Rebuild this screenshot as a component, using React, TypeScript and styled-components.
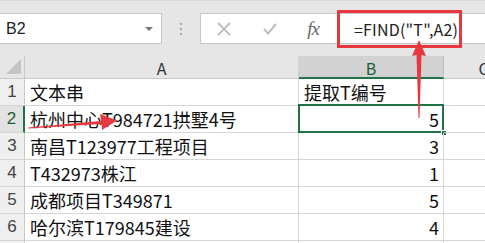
import React from 'react';
import styled, { createGlobalStyle } from 'styled-components';

const GlobalStyle = createGlobalStyle`
  html, body {
    margin: 0;
    padding: 0;
    overflow: hidden;
    background: #ffffff;
  }
`;

const FONT = `"Noto Sans CJK SC", "Noto Sans", sans-serif`;
const GREEN = '#217346';
const GRID = '#d6d6d6';

const Page = styled.div`
  position: relative;
  width: 485px;
  height: 243px;
  overflow: hidden;
  font-family: ${FONT};
  color: #111;
`;

const Toolbar = styled.div`
  display: flex;
  align-items: flex-start;
  height: 56px;
  box-sizing: border-box;
  padding-top: 13px;
  background: #e6e6e6;
  border-top: 1px solid #d8d8d8;
`;

const NameBox = styled.div`
  display: flex;
  align-items: center;
  justify-content: space-between;
  width: 162px;
  height: 31px;
  box-sizing: border-box;
  margin-top: -1px;
  padding: 0 8px 0 6px;
  background: #fff;
  border: 1px solid #c6c6c6;
  border-left: none;
  font-family: "Liberation Sans", sans-serif;
  font-size: 16px;
  color: #222;
`;

const Caret = styled.span`
  width: 0;
  height: 0;
  border-left: 4px solid transparent;
  border-right: 4px solid transparent;
  border-top: 4px solid #777;
`;

const Grip = styled.div`
  display: flex;
  flex-direction: column;
  align-items: center;
  gap: 3px;
  width: 38px;
  padding-top: 9px;

  span {
    width: 2px;
    height: 2px;
    background: #a8a8a8;
  }
`;

const FormulaBox = styled.div`
  flex: 1;
  display: flex;
  align-items: center;
  height: 31px;
  box-sizing: border-box;
  margin-top: -1px;
  background: #fff;
  border: 1px solid #c6c6c6;
  border-right: none;
`;

const IconButton = styled.div<{ $w: number }>`
  display: flex;
  align-items: center;
  justify-content: center;
  width: ${p => p.$w}px;
  height: 100%;
`;

const Fx = styled.span`
  font-family: "Liberation Serif", serif;
  font-style: italic;
  font-size: 19px;
  color: #666;
  letter-spacing: -1px;
`;

const FormulaText = styled.div`
  padding-left: 21px;
  font-family: ${FONT};
  font-size: 16px;
  letter-spacing: 0.2px;
  color: #222;
  white-space: nowrap;
`;

const Highlight = styled.div`
  position: absolute;
  left: 337px;
  top: 10px;
  width: 125px;
  height: 38px;
  box-sizing: border-box;
  border: 3px solid #e8383d;
`;

const Sheet = styled.div`
  display: grid;
  grid-template-columns: 25px 274px 145px 80px;
  grid-template-rows: 23px repeat(7, 27px);
  background: #fff;
`;

const Corner = styled.div`
  position: relative;
  background: #e6e6e6;
  border-right: 1px solid #c8c8c8;
  border-bottom: 1px solid #c8c8c8;

  &::after {
    content: '';
    position: absolute;
    right: 3px;
    bottom: 4px;
    width: 0;
    height: 0;
    border-left: 15px solid transparent;
    border-bottom: 15px solid #c4c4c4;
  }
`;

const ColHeader = styled.div<{ $active?: boolean }>`
  display: flex;
  align-items: center;
  justify-content: center;
  box-sizing: border-box;
  padding-top: 2px;
  background: ${p => (p.$active ? '#d2d2d2' : '#e6e6e6')};
  border-right: 1px solid ${p => (p.$active ? '#bdbdbd' : '#d0d0d0')};
  border-bottom: ${p => (p.$active ? `2px solid ${GREEN}` : '1px solid #c8c8c8')};
  font-size: 16px;
  color: ${p => (p.$active ? '#1d5e3a' : '#333')};
  overflow: hidden;
  white-space: nowrap;
`;

const RowHeader = styled.div<{ $active?: boolean }>`
  display: flex;
  align-items: center;
  justify-content: center;
  box-sizing: border-box;
  background: ${p => (p.$active ? '#e2e2e2' : '#efefef')};
  border-right: ${p => (p.$active ? `2px solid ${GREEN}` : '1px solid #c8c8c8')};
  border-bottom: 1px solid #d4d4d4;
  font-family: "Liberation Sans", sans-serif;
  font-size: 17px;
  color: ${p => (p.$active ? '#1d5e3a' : '#444')};
`;

const Cell = styled.div<{ $num?: boolean; $selected?: boolean }>`
  position: relative;
  display: flex;
  align-items: center;
  justify-content: ${p => (p.$num ? 'flex-end' : 'flex-start')};
  box-sizing: border-box;
  padding: ${p => (p.$num ? '0 4px 0 0' : '0 0 0 5px')};
  border-right: 1px solid ${GRID};
  border-bottom: 1px solid ${GRID};
  font-size: 18px;
  line-height: 1;
  white-space: nowrap;

  ${p =>
    p.$selected &&
    `
    &::before {
      content: '';
      position: absolute;
      left: -1px;
      top: -2px;
      right: -1px;
      bottom: -1px;
      border: 2px solid ${GREEN};
    }
    &::after {
      content: '';
      position: absolute;
      right: -4px;
      bottom: -4px;
      width: 6px;
      height: 6px;
      background: ${GREEN};
      border: 1px solid #fff;
      box-sizing: border-box;
    }
  `}
`;

const Arrows = styled.svg`
  position: absolute;
  left: 0;
  top: 0;
  pointer-events: none;
`;

const rows: [string, string][] = [
  ['文本串', '提取T编号'],
  ['杭州中心T984721拱墅4号', '5'],
  ['南昌T123977工程项目', '3'],
  ['T432973株江', '1'],
  ['成都项目T349871', '5'],
  ['哈尔滨T179845建设', '4'],
  ['', ''],
];

const App: React.FC = () => (
  <Page>
    <GlobalStyle />
    <Toolbar>
      <NameBox>
        B2
        <Caret />
      </NameBox>
      <Grip>
        <span />
        <span />
        <span />
      </Grip>
      <FormulaBox>
        <IconButton $w={46}>
          <svg width="14" height="14" viewBox="0 0 14 14">
            <path d="M1 1 L13 13 M13 1 L1 13" stroke="#bdbdbd" strokeWidth="1.8" fill="none" />
          </svg>
        </IconButton>
        <IconButton $w={46}>
          <svg width="14" height="12" viewBox="0 0 14 12">
            <path d="M1 6 L5 10.5 L13 1" stroke="#bdbdbd" strokeWidth="2" fill="none" />
          </svg>
        </IconButton>
        <IconButton $w={40}>
          <Fx>fx</Fx>
        </IconButton>
        <FormulaText>=FIND("T",A2)</FormulaText>
      </FormulaBox>
    </Toolbar>
    <Highlight />
    <Sheet>
      <Corner />
      <ColHeader>A</ColHeader>
      <ColHeader $active>B</ColHeader>
      <ColHeader>C</ColHeader>
      {rows.map(([a, b], i) => (
        <React.Fragment key={i}>
          <RowHeader $active={i === 1}>{i < 6 ? i + 1 : ''}</RowHeader>
          <Cell>{a}</Cell>
          <Cell $num={i > 0} $selected={i === 1}>
            {b}
          </Cell>
          <Cell />
        </React.Fragment>
      ))}
    </Sheet>
    <Arrows width="485" height="243" viewBox="0 0 485 243">
      <path d="M419 40 L426 56 L421.5 55 L419.5 118 L418.5 118 L416.5 55 L412 56 Z" fill="#e8383d" />
      <path d="M28 127.5 L101 121 L100 114 L117 120.5 L102 130 L101.5 124 L28 128.5 Z" fill="#e8383d" />
    </Arrows>
  </Page>
);

export default App;
